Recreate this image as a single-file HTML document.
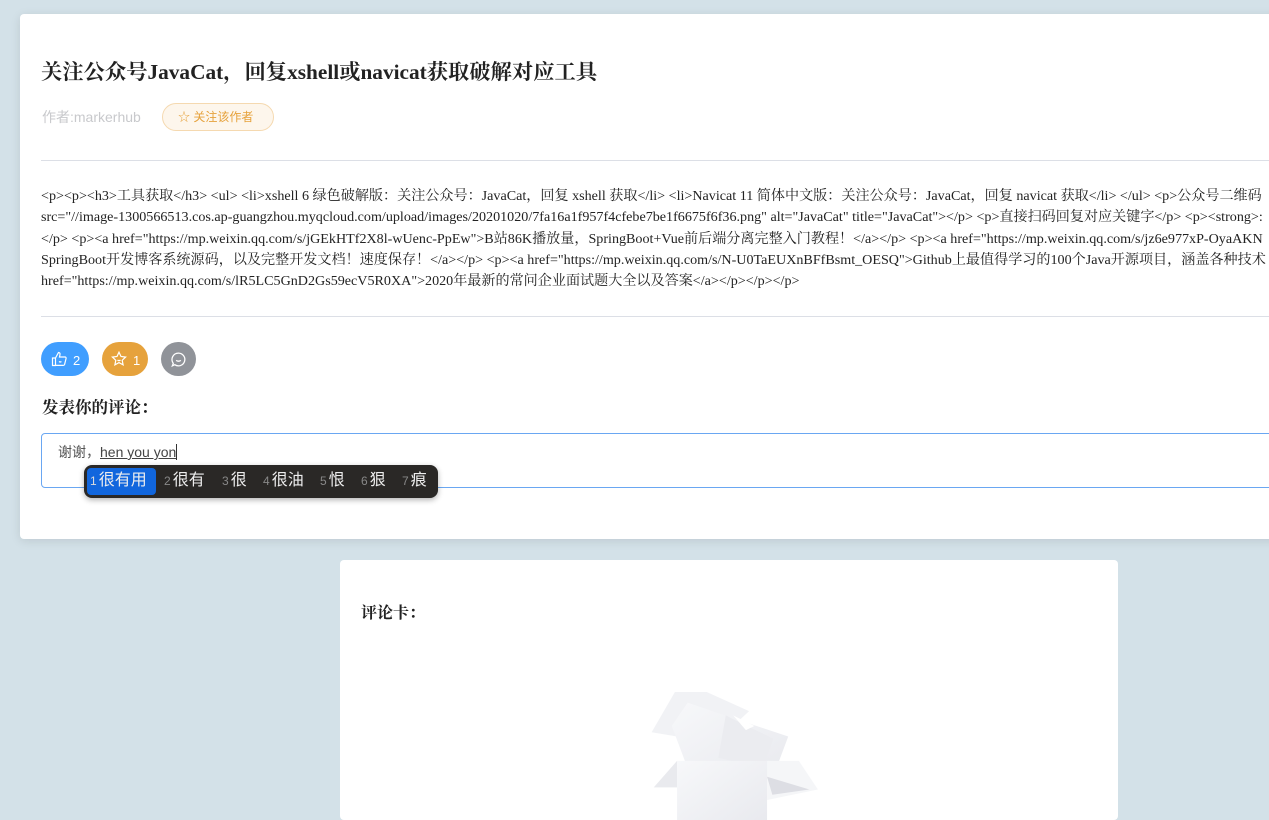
<!DOCTYPE html>
<html><head><meta charset="utf-8"><style>
*{margin:0;padding:0;box-sizing:border-box}
body{width:1269px;height:811px;overflow:hidden;background:#d3e1e8;position:relative;font-family:"Liberation Serif","Noto Serif CJK SC",serif;color:#303133}
.card{position:absolute;left:20px;top:14px;width:1280px;height:525px;background:#fff;border-radius:4px;box-shadow:0 2px 10px rgba(0,0,0,.1);overflow:hidden}
h1{position:absolute;left:21px;top:41px;font-size:21.3px;font-weight:bold;white-space:nowrap;color:#222}
.meta{position:absolute;left:22px;top:93px;font-family:"Liberation Sans","Noto Sans CJK SC",sans-serif;font-size:14px;color:#c8c9cc}
.follow{position:absolute;left:142px;top:89px;width:112px;height:28px;border:1px solid #f5d9b0;background:#fdf6ec;border-radius:14px;color:#e6a23c;font-family:"Liberation Sans","Noto Sans CJK SC",sans-serif;font-size:12px;line-height:26px;padding-left:15px}
.hr{position:absolute;left:21px;right:0;height:1px;background:#dcdfe6}
.content{position:absolute;left:21px;top:172px;font-size:14.1px;line-height:21.3px;white-space:nowrap;color:#222}
.btn{position:absolute;top:328px;height:34px;border-radius:17px;color:#fff;font-family:"Liberation Sans",sans-serif;font-size:13px}
.lbl{position:absolute;left:22px;top:380px;font-size:16.5px;color:#222;font-weight:bold}
.input{position:absolute;left:21px;top:419px;width:1300px;height:55px;border:1px solid #6aa7f2;border-radius:4px;font-family:"Liberation Sans","Noto Sans CJK SC",sans-serif;font-size:14px;color:#555;padding:8px 0 0 16px}
.ime{position:absolute;left:84px;top:465px;width:354px;height:33px;background:#2a2826;border-radius:8px;box-shadow:0 2px 6px rgba(0,0,0,.3);font-family:"Liberation Sans","Noto Sans CJK SC",sans-serif;color:#eee;font-size:16px;white-space:nowrap}
.ime span{position:absolute;top:4px;line-height:24px}
.ime small{font-size:12px;color:#888;margin-right:2px}
.card2{position:absolute;left:340px;top:560px;width:778px;height:260px;background:#fff;border-radius:4px}
</style></head><body>
<div class="card">
<h1>关注公众号JavaCat，回复xshell或navicat获取破解对应工具</h1>
<div class="meta">作者:markerhub</div>
<div class="follow">☆ 关注该作者</div>
<div class="hr" style="top:146px"></div>
<div class="content">&lt;p&gt;&lt;p&gt;&lt;h3&gt;工具获取&lt;/h3&gt; &lt;ul&gt; &lt;li&gt;xshell 6 绿色破解版：关注公众号：JavaCat，回复 xshell 获取&lt;/li&gt; &lt;li&gt;Navicat 11 简体中文版：关注公众号：JavaCat，回复 navicat 获取&lt;/li&gt; &lt;/ul&gt; &lt;p&gt;公众号二维码<br>src="//image-1300566513.cos.ap-guangzhou.myqcloud.com/upload/images/20201020/7fa16a1f957f4cfebe7be1f6675f6f36.png" alt="JavaCat" title="JavaCat"&gt;&lt;/p&gt; &lt;p&gt;直接扫码回复对应关键字&lt;/p&gt; &lt;p&gt;&lt;strong&gt;:<br>&lt;/p&gt; &lt;p&gt;&lt;a href="https://mp.weixin.qq.com/s/jGEkHTf2X8l-wUenc-PpEw"&gt;B站86K播放量，SpringBoot+Vue前后端分离完整入门教程！&lt;/a&gt;&lt;/p&gt; &lt;p&gt;&lt;a href="https://mp.weixin.qq.com/s/jz6e977xP-OyaAKN<br>SpringBoot开发博客系统源码，以及完整开发文档！速度保存！&lt;/a&gt;&lt;/p&gt; &lt;p&gt;&lt;a href="https://mp.weixin.qq.com/s/N-U0TaEUXnBFfBsmt_OESQ"&gt;Github上最值得学习的100个Java开源项目，涵盖各种技术<br>href="https://mp.weixin.qq.com/s/lR5LC5GnD2Gs59ecV5R0XA"&gt;2020年最新的常问企业面试题大全以及答案&lt;/a&gt;&lt;/p&gt;&lt;/p&gt;&lt;/p&gt;</div>
<div class="hr" style="top:302px"></div>
<div class="btn" style="left:21px;width:48px;background:#409eff">
<svg style="position:absolute;left:10px;top:9px" width="16" height="16" viewBox="0 0 16 16" fill="none" stroke="#fff" stroke-width="1.2"><path d="M1.5 7h3v7.5h-3zM4.5 7l3-5.5c1 0 1.8.8 1.5 2L8.5 6H14c.8 0 1.3.7 1.1 1.4l-1.5 6c-.2.6-.7 1-1.3 1H4.5"/><path d="M8 10.5q1.2 1 2.4 0"/></svg>
<span style="position:absolute;left:32px;top:11px">2</span></div>
<div class="btn" style="left:82px;width:46px;background:#e6a23c">
<svg style="position:absolute;left:9px;top:9px" width="16" height="16" viewBox="0 0 16 16" fill="none" stroke="#fff" stroke-width="1.2"><path d="M8 1.2l2 4.3 4.6.6-3.4 3.2.9 4.6L8 11.6 3.9 13.9l.9-4.6L1.4 6.1 6 5.5z"/><path d="M6.5 9q1.5 1.2 3 0"/></svg>
<span style="position:absolute;left:31px;top:11px">1</span></div>
<div class="btn" style="left:141px;width:35px;background:#909399">
<svg style="position:absolute;left:9px;top:9px" width="17" height="17" viewBox="0 0 16 16" fill="none" stroke="#fff" stroke-width="1.2"><path d="M8 2a6 6 0 1 1-3.5 10.9L2.2 14l.9-2.4A6 6 0 0 1 8 2z"/><path d="M5.8 8.8q2.2 1.6 4.4 0"/></svg></div>
<div class="lbl">发表你的评论：</div>
<div class="input">谢谢，<span style="text-decoration:underline;color:#444">hen you yon</span><span style="display:inline-block;width:1px;height:16px;background:#333;vertical-align:-3px"></span></div>
</div>
<div class="ime">
<div style="position:absolute;left:3px;top:3px;width:69px;height:27px;background:#1166dd;border-radius:4px"></div>
<span style="left:6px"><small style="color:#ddd">1</small>很有用</span>
<span style="left:80px"><small>2</small>很有</span>
<span style="left:138px"><small>3</small>很</span>
<span style="left:179px"><small>4</small>很油</span>
<span style="left:236px"><small>5</small>恨</span>
<span style="left:277px"><small>6</small>狠</span>
<span style="left:318px"><small>7</small>痕</span>
</div>
<div class="card2">
<div style="position:absolute;left:21px;top:40px;font-size:16px;color:#222;font-weight:bold">评论卡：</div>
<svg style="position:absolute;left:300px;top:110px" width="180" height="150" viewBox="0 0 170 140">
<defs><linearGradient id="g" x1="0" y1="0" x2="1" y2="1"><stop offset="0" stop-color="#f7f8fa"/><stop offset="1" stop-color="#e8e9ee"/></linearGradient></defs>
<path d="M33 20h30l40 18-32 30-60-10z" fill="#f1f2f5"/>
<path d="M45 30l35 12 60 20-15 40-80-10-15-40z" fill="url(#g)"/>
<path d="M81 42l20 10 25 12-10 28-42-10z" fill="#ebecf0"/>
<path d="M88 42l20 10-8 4z" fill="#fff"/>
<path d="M13 110l22-25v25z" fill="#e9eaee"/>
<path d="M35 85h85v60H35z" fill="url(#g)"/>
<path d="M120 85h30l18 27-48 10z" fill="#f5f6f8"/>
<path d="M120 100l40 12-35 5z" fill="#dddee4"/>
</svg>
</div>
</body></html>
